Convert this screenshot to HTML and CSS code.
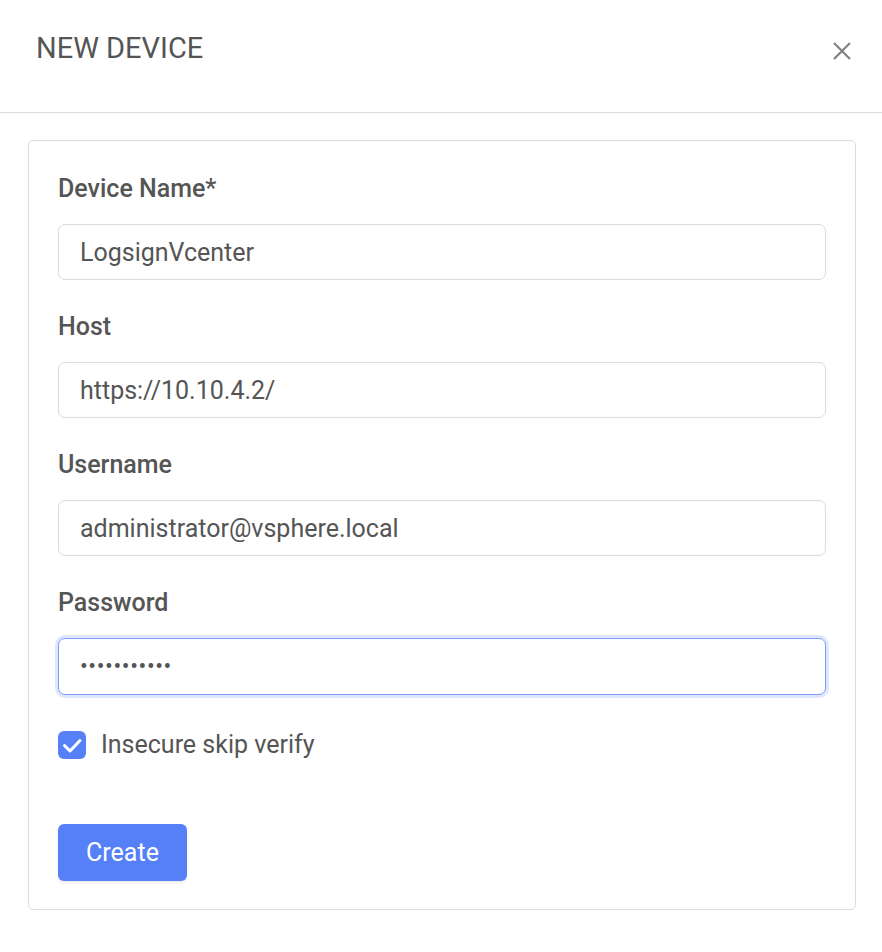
FILE: index.html
```html
<!DOCTYPE html>
<html>
<head>
<meta charset="utf-8">
<link rel="stylesheet" href="styles.css">
</head>
<body>
<div class="modal">
  <div class="modal-header">
    <h1 class="title">NEW DEVICE</h1>
    <button class="close" aria-label="Close">
      <svg width="20" height="20" viewBox="0 0 20 20"><path d="M2 2L18 18M18 2L2 18" stroke="#808080" stroke-width="2.2" fill="none"/></svg>
    </button>
  </div>
  <div class="modal-body">
    <form class="card">
      <div class="field">
        <label class="label">Device Name*</label>
        <input class="input" type="text" value="LogsignVcenter">
      </div>
      <div class="field">
        <label class="label">Host</label>
        <input class="input" type="text" value="https://10.10.4.2/">
      </div>
      <div class="field">
        <label class="label">Username</label>
        <input class="input" type="text" value="administrator@vsphere.local">
      </div>
      <div class="field">
        <label class="label">Password</label>
        <div class="input focused"><span class="dots">•••••••••••</span></div>
      </div>
      <div class="check-row">
        <span class="checkbox">
          <svg width="28" height="28" viewBox="0 0 28 28"><path d="M6.5 14.5L12 20L22 9.5" stroke="#fff" stroke-width="3" fill="none" stroke-linecap="round" stroke-linejoin="round"/></svg>
        </span>
        <span class="check-label">Insecure skip verify</span>
      </div>
      <div class="actions">
        <button type="button" class="btn">Create</button>
      </div>
    </form>
  </div>
</div>
</body>
</html>
```
FILE: styles.css
```css
* { box-sizing: border-box; }
html, body { margin: 0; padding: 0; background: #fff; }
body { font-family: Roboto, "Liberation Sans", sans-serif; color: #555; }

.modal { width: 882px; }

.modal-header {
  height: 113px;
  border-bottom: 1px solid #dcdcdc;
  display: flex;
  align-items: flex-start;
  justify-content: space-between;
  padding: 30px 30px 0 36px;
}
.title {
  margin: 0;
  font-size: 29px;
  font-weight: 400;
  line-height: 36px;
  color: #555;
}
.close {
  border: 0;
  background: none;
  padding: 0;
  margin-top: 11px;
  width: 20px;
  height: 20px;
  cursor: pointer;
}
.close svg { display: block; }

.modal-body { padding: 27px 26px 0 28px; }

.card {
  border: 1px solid #dcdcdc;
  border-radius: 5px;
  padding: 32px 29px 28px 29px;
  height: 770px;
  display: flex;
  flex-direction: column;
}

.field { display: flex; flex-direction: column; margin-bottom: 31px; }
.label {
  font-size: 25px;
  font-weight: 500;
  line-height: 32px;
  color: #555;
  margin-bottom: 19px;
}
.input {
  height: 56px;
  border: 1px solid #dcdcdc;
  border-radius: 7px;
  padding: 0 21px;
  font-family: Roboto, "Liberation Sans", sans-serif;
  font-size: 25px;
  color: #555;
  outline: none;
  width: 100%;
  background: #fff;
}
.input.focused {
  height: 57px;
  border-color: #7d9ef8;
  box-shadow: 0 0 0 3px #dfe7fd;
  display: flex;
  align-items: center;
}
.dots { font-size: 23px; letter-spacing: 0.6px; color: #555; }

.check-row {
  display: flex;
  align-items: center;
  gap: 15px;
  margin-top: 4px;
}
.checkbox {
  width: 28px;
  height: 28px;
  border-radius: 6px;
  background: #5580f8;
  display: flex;
  align-items: center;
  justify-content: center;
}
.checkbox svg { display: block; }
.check-label { font-size: 25px; color: #555; line-height: 30px; }

.actions { margin-top: 64px; }
.btn {
  width: 129px;
  height: 57px;
  border: 0;
  border-radius: 6px;
  background: #5580f8;
  color: #fff;
  font-family: Roboto, "Liberation Sans", sans-serif;
  font-size: 25px;
  box-shadow: 0 2px 3px rgba(0,0,0,0.08);
  cursor: pointer;
}
```
